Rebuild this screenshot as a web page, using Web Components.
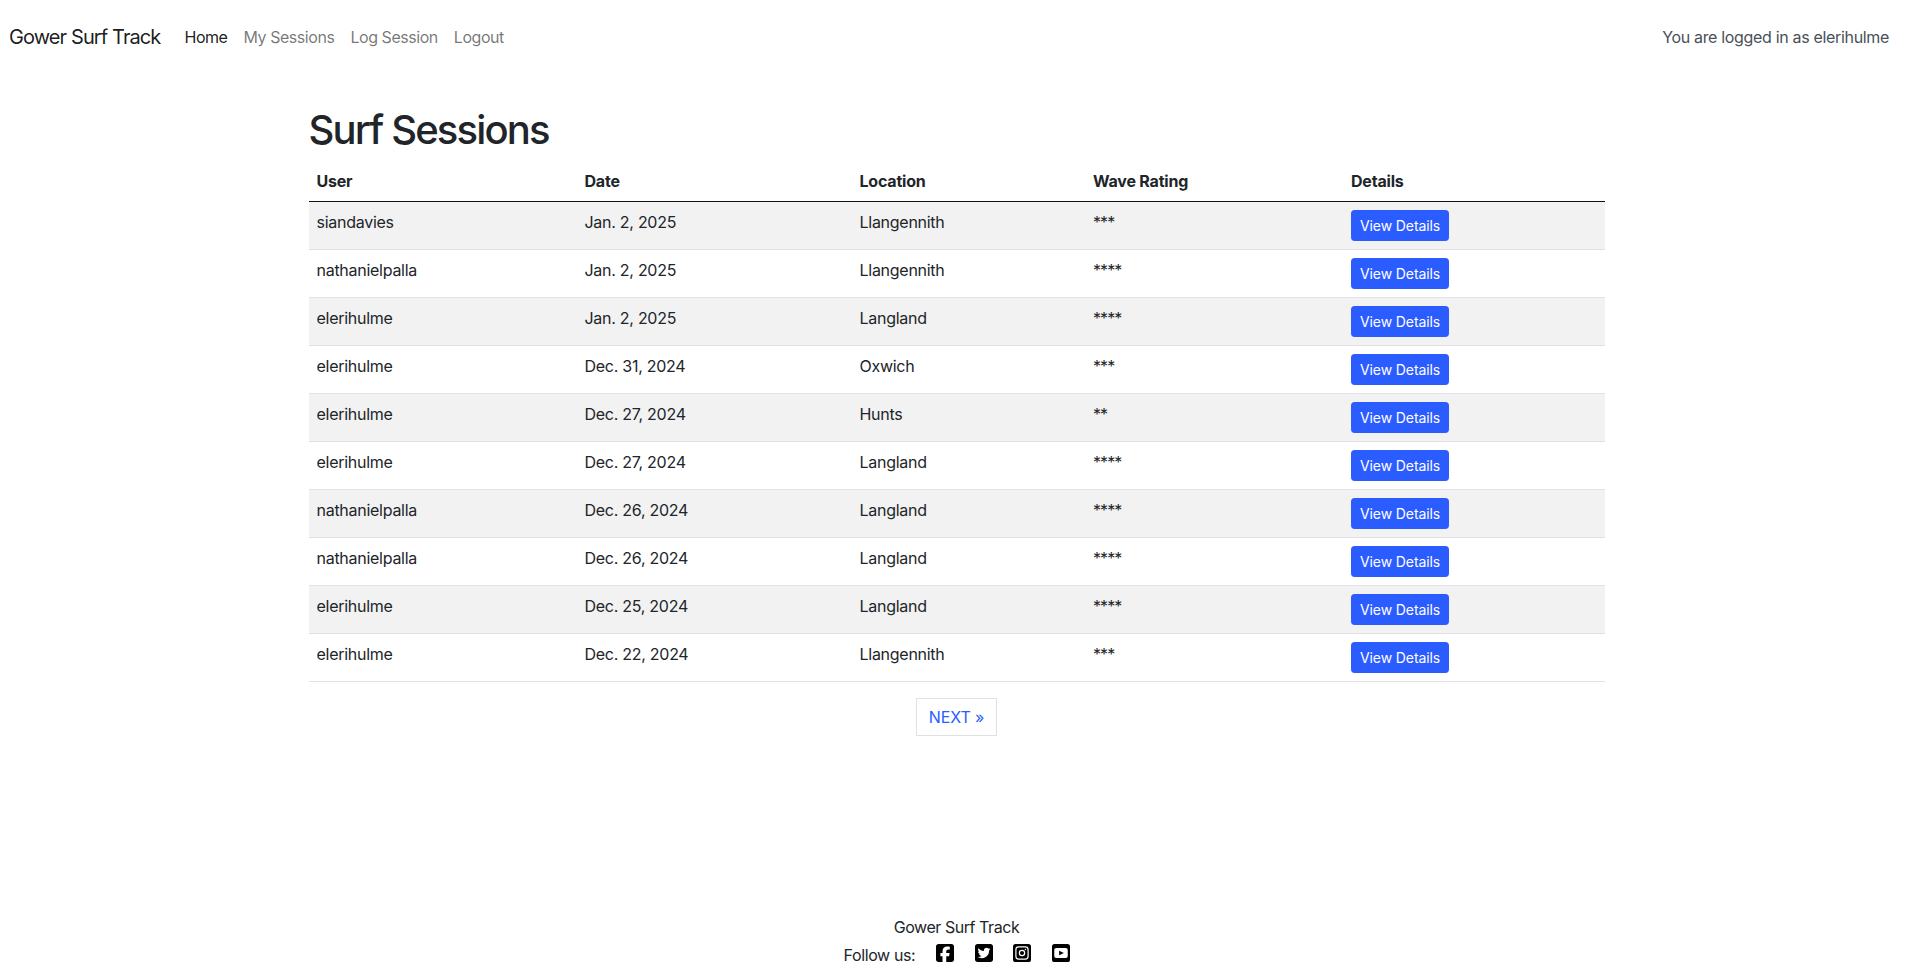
<!DOCTYPE html>
<html lang="en"><head><meta charset="utf-8"><title>Gower Surf Track</title>
<style>
html,body{margin:0;padding:0;background:#fff}
body{font:400 16px/24px Inter,"Liberation Sans",sans-serif;color:#212529;min-height:978px;box-sizing:border-box;padding-right:4px;display:flex;flex-direction:column}
main{flex:1}
</style></head><body>
<site-nav user="elerihulme"></site-nav>
<main>
<sessions-page>
<session-row user="siandavies" date="Jan. 2, 2025" loc="Llangennith" rating="***"></session-row>
<session-row user="nathanielpalla" date="Jan. 2, 2025" loc="Llangennith" rating="****"></session-row>
<session-row user="elerihulme" date="Jan. 2, 2025" loc="Langland" rating="****"></session-row>
<session-row user="elerihulme" date="Dec. 31, 2024" loc="Oxwich" rating="***"></session-row>
<session-row user="elerihulme" date="Dec. 27, 2024" loc="Hunts" rating="**"></session-row>
<session-row user="elerihulme" date="Dec. 27, 2024" loc="Langland" rating="****"></session-row>
<session-row user="nathanielpalla" date="Dec. 26, 2024" loc="Langland" rating="****"></session-row>
<session-row user="nathanielpalla" date="Dec. 26, 2024" loc="Langland" rating="****"></session-row>
<session-row user="elerihulme" date="Dec. 25, 2024" loc="Langland" rating="****"></session-row>
<session-row user="elerihulme" date="Dec. 22, 2024" loc="Llangennith" rating="***"></session-row>
</sessions-page>
</main>
<site-footer></site-footer>
<script>
const COLS='268px 275px 233.5px 258px 261.5px';
function el(name,html){customElements.define(name,class extends HTMLElement{
  connectedCallback(){ if(this.shadowRoot)return; const r=this.attachShadow({mode:'open'}); r.innerHTML=html(this); }
});}
el('site-nav',h=>`<style>
:host{display:block}
nav{display:flex;align-items:center;height:74px;padding:0 24px 0 9px;box-sizing:border-box}
.brand{font-size:20px;line-height:30px;color:rgba(0,0,0,.9);margin-right:16px;letter-spacing:-.9px}
a{text-decoration:none;padding:0 8px;color:rgba(0,0,0,.55);letter-spacing:-.45px}
a.active{color:rgba(0,0,0,.9)}
.links{display:flex}
.user{margin-left:auto;color:#495057;letter-spacing:-.33px}
</style><nav><a class="brand" style="padding:0" href="#">Gower Surf Track</a><div class="links"><a class="active" href="#">Home</a><a href="#">My Sessions</a><a href="#">Log Session</a><a href="#">Logout</a></div><span class="user">You are logged in as ${h.getAttribute('user')}</span></nav>`);
el('sessions-page',()=>`<style>
:host{display:block;width:1296px;margin:0 auto;padding-top:32px}
h1{font-size:40px;font-weight:500;line-height:48px;margin:0 0 7px;color:#212529;letter-spacing:-1.85px}
.head{display:grid;grid-template-columns:${COLS};font-weight:700;border-bottom:1px solid #111;height:41px;box-sizing:border-box;letter-spacing:-.2px;color:#212529}
.head span{padding:8px}
.rows{display:flex;flex-direction:column}
::slotted(session-row:nth-child(odd)){background:#f2f2f2}
.pg{display:flex;justify-content:center;margin-top:16px}
.pg a{display:block;padding:6px 12px;border:1px solid #dee2e6;color:#2b5cff;text-decoration:none;letter-spacing:-.1px}
</style><h1>Surf Sessions</h1><div class="head"><span>User</span><span>Date</span><span>Location</span><span>Wave Rating</span><span>Details</span></div>
<div class="rows"><slot></slot></div><div class="pg"><a href="#">NEXT »</a></div>`);
el('session-row',h=>{const g=a=>h.getAttribute(a);return `<style>
:host{display:grid;grid-template-columns:${COLS};height:48px;box-sizing:border-box;border-bottom:1px solid #dee2e6;color:#212529;letter-spacing:-.27px}
span{padding:8px;display:block}
.r{letter-spacing:-.95px}
.b{display:inline-block;background:#2b5cff;color:#fff;font-size:14px;line-height:21px;padding:4px 8px;border:1px solid #2b5cff;border-radius:3.2px;text-decoration:none;letter-spacing:-.1px}
</style><span>${g('user')}</span><span>${g('date')}</span><span>${g('loc')}</span><span class="r">${g('rating')}</span><span><a class="b" href="#">View Details</a></span>`});
el('site-footer',()=>`<style>
:host{display:block;text-align:center;padding-bottom:11px;color:#212529}
.t{letter-spacing:-.45px}
.f{display:flex;justify-content:center;align-items:flex-start;gap:21px;margin-top:4px;letter-spacing:-.37px}
.f span{position:relative}
svg{width:18px;height:18px;fill:#000;display:block}
.icons{display:flex;gap:20.4px;padding-top:1px}
</style><div class="t">Gower Surf Track</div><div class="f"><span>Follow us:</span><div class="icons">
<svg viewBox="0 32 448 448"><path d="M64 32C28.7 32 0 60.7 0 96V416c0 35.3 28.7 64 64 64h98.2V334.2H109.4V256h52.8V222.3c0-87.1 39.4-127.5 125-127.5c16.2 0 44.2 3.2 55.7 6.4V172c-6-.6-16.5-1-29.6-1c-42 0-58.2 15.9-58.2 57.2V256h83.6l-14.4 78.2H255V480H384c35.3 0 64-28.7 64-64V96c0-35.3-28.7-64-64-64H64z"/></svg>
<svg viewBox="0 32 448 448"><path d="M64 32C28.7 32 0 60.7 0 96V416c0 35.3 28.7 64 64 64H384c35.3 0 64-28.7 64-64V96c0-35.3-28.7-64-64-64H64zM351.3 199.3v0c0 86.7-66 186.6-186.6 186.6c-37.2 0-71.7-10.8-100.7-29.4c5.3 .6 10.4 .8 15.8 .8c30.7 0 58.9-10.4 81.4-28c-28.8-.6-53-19.5-61.3-45.5c10.1 1.5 19.2 1.5 29.6-1.2c-30-6.1-52.5-32.5-52.5-64.4v-.8c8.7 4.9 18.9 7.9 29.6 8.3c-9-6-16.4-14.1-21.5-23.6s-7.8-20.2-7.7-31c0-12.2 3.2-23.4 8.9-33.1c32.3 39.8 80.8 65.8 135.2 68.6c-9.3-44.5 24-80.6 64-80.6c18.9 0 35.9 7.9 47.9 20.7c14.8-2.8 29-8.3 41.6-15.8c-4.9 15.2-15.2 28-28.8 36.1c13.2-1.4 26-5.1 37.8-10.2c-8.9 13.1-20.1 24.7-32.9 34c.2 2.8 .2 5.7 .2 8.5z"/></svg>
<svg viewBox="0 32 448 448"><rect y="32" width="448" height="448" rx="64"/><rect x="72" y="104" width="304" height="304" rx="72" fill="none" stroke="#fff" stroke-width="30"/><circle cx="224" cy="256" r="66" fill="none" stroke="#fff" stroke-width="30"/><circle cx="310" cy="170" r="18" fill="#fff"/></svg>
<svg viewBox="0 32 448 448"><rect y="32" width="448" height="448" rx="64"/><rect x="56" y="130" width="336" height="252" rx="50" fill="#fff"/><path d="M178 200l118 56-118 56z"/></svg>
</div></div>`);
</script>
</body></html>
